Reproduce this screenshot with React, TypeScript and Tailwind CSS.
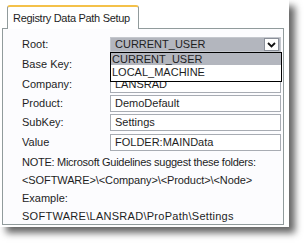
const fields = [
  { label: "Base Key:", value: "", gap: "mt-[4px]" },
  { label: "Company:", value: "LANSRAD", gap: "mt-[3px]" },
  { label: "Product:", value: "DemoDefault", gap: "mt-[2px]" },
  { label: "SubKey:", value: "Settings", gap: "mt-[2px]" },
  { label: "Value", value: "FOLDER:MAINData", gap: "mt-[3px]" },
];

const noteLines = [
  { text: "NOTE: Microsoft Guidelines suggest these folders:", track: "tracking-[-0.27px]" },
  { text: "<SOFTWARE>\\<Company>\\<Product>\\<Node>", track: "tracking-[-0.1px]" },
  { text: "Example:", track: "" },
  { text: "SOFTWARE\\LANSRAD\\ProPath\\Settings", track: "tracking-[0.28px]" },
];

function Chevron() {
  return (
    <svg width="9" height="6" viewBox="0 0 9 6" fill="none" stroke="#111" strokeWidth="1.8">
      <path d="M1 1l3.5 3.5L8 1" />
    </svg>
  );
}

export default function App() {
  return (
    <div className="h-[245px] w-[304px] bg-white font-['Liberation_Sans',Arial,sans-serif] text-[11px] text-[#1e1e1e]">
      <div className="h-[227px] w-[289px] bg-white pt-[5px] shadow-[6px_6px_7px_rgba(0,0,0,0.6)]">
        {/* tab */}
        <div className="relative z-10 -mb-px ml-[7px] flex h-[24px] w-[132px] items-center rounded-t-[3px] border-x border-t-2 border-x-[#919b9c] border-t-[#f4c14a] bg-white pl-[5px] tracking-[-0.3px]">
          Registry Data Path Setup
        </div>

        {/* panel */}
        <div className="relative ml-[2px] h-[197px] w-[282px] border border-[#919b9c] bg-[#fcfcfe] pt-[8px]">
          <div className="flex h-[15px] items-center">
            <div className="w-[107px] pl-[19px]">Root:</div>
            <div className="flex h-[15px] w-[171px] items-center justify-between border border-[#c4c7cd] bg-[#b3b6be] pl-[4px]">
              <span>CURRENT_USER</span>
              <div className="mr-px flex h-[13px] w-[15px] items-center justify-center border border-[#8a8f99] bg-white">
                <Chevron />
              </div>
            </div>
          </div>

          {fields.map((f) => (
            <div key={f.label} className={`flex h-[17px] items-center ${f.gap}`}>
              <div className="w-[107px] pl-[19px]">{f.label}</div>
              <div className="flex h-[17px] w-[171px] items-center border border-[#a8acb3] bg-white pl-[4px]">
                {f.value}
              </div>
            </div>
          ))}

          <div className="mt-[2px] pl-[19px] leading-[18px]">
            {noteLines.map((line) => (
              <div key={line.text} className={line.track}>
                {line.text}
              </div>
            ))}
          </div>

          {/* open dropdown list */}
          <div className="absolute left-[107px] top-[23px] z-20 h-[30px] w-[172px] border border-black bg-white">
            <div className="flex h-[12px] items-center bg-[#b3b6be] pl-px">CURRENT_USER</div>
            <div className="flex h-[15px] items-center pl-px">LOCAL_MACHINE</div>
          </div>
        </div>
      </div>
    </div>
  );
}
